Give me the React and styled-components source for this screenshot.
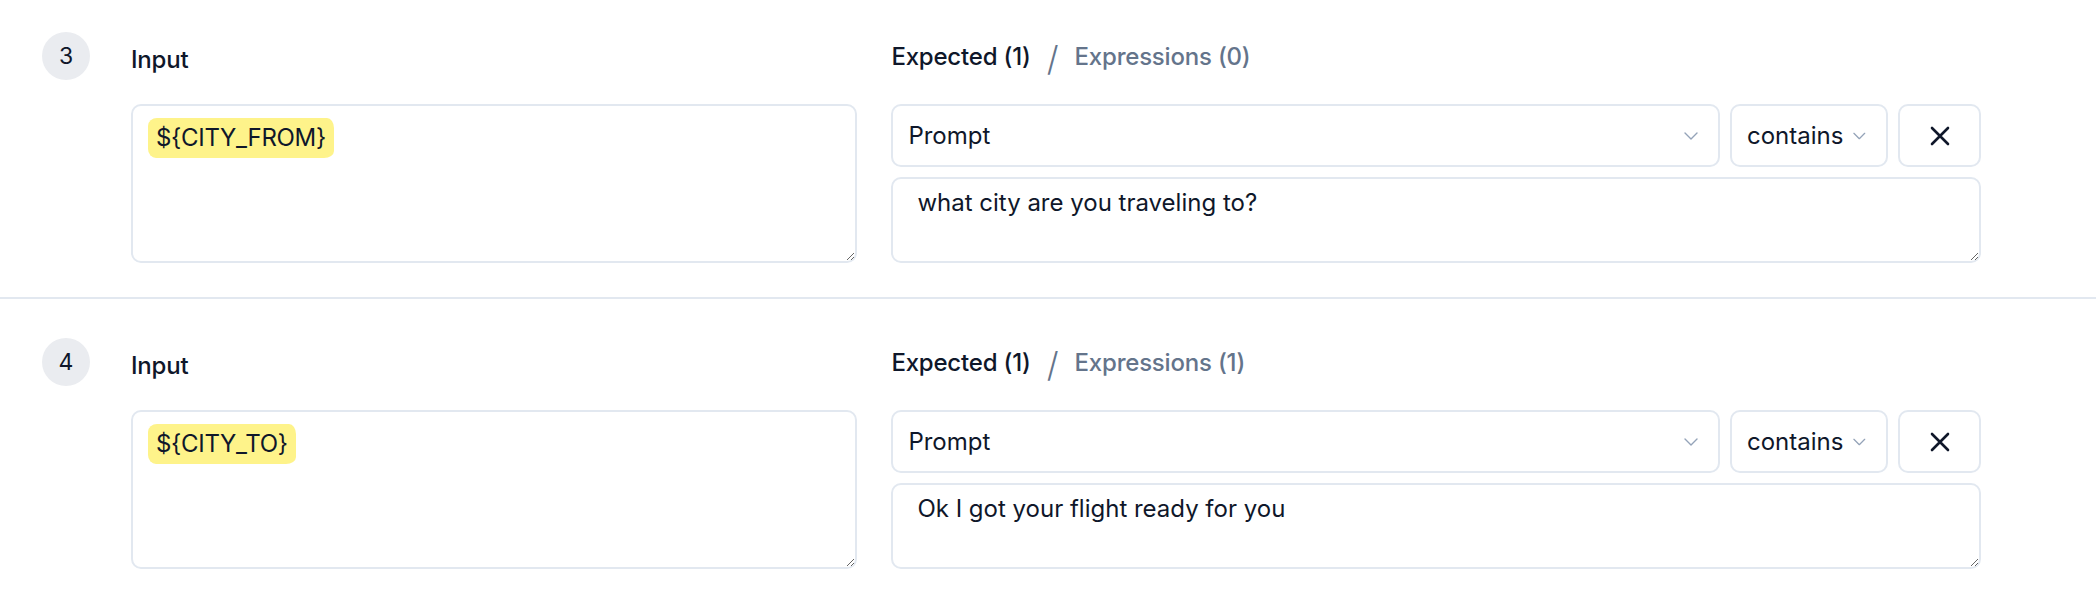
import React from 'react';
import styled, { createGlobalStyle } from 'styled-components';

const GlobalStyle = createGlobalStyle`
  * { box-sizing: border-box; }
  body {
    margin: 0;
    background: #fff;
    font-family: Inter, "Noto Sans", "Liberation Sans", sans-serif;
    color: #0f172a;
  }
`;

const cases = [
  { id: 3, variable: 'CITY_FROM', expected: 1, expressions: 0, text: 'what city are you traveling to?' },
  { id: 4, variable: 'CITY_TO', expected: 1, expressions: 1, text: 'Ok I got your flight ready for you' },
];

function Chevron() {
  return (
    <svg width="14" height="8" viewBox="0 0 14 8" fill="none">
      <polyline points="1,1 7,7 13,1" stroke="#94a3b8" strokeWidth="1.4" strokeLinecap="round" strokeLinejoin="round" />
    </svg>
  );
}

function CloseIcon() {
  return (
    <svg width="20" height="20" viewBox="0 0 20 20" fill="none">
      <path d="M2 2 L18 18 M18 2 L2 18" stroke="#0f172a" strokeWidth="2.6" strokeLinecap="round" />
    </svg>
  );
}

function TestCase({ item }) {
  return (
    <Row>
      <Badge>{item.id}</Badge>
      <Columns>
        <Column>
          <Header>
            <Label $offset>Input</Label>
          </Header>
          <InputBox>
            <Variable>{'${' + item.variable + '}'}</Variable>
          </InputBox>
        </Column>
        <Column>
          <Header>
            <Label>Expected ({item.expected})</Label>
            <Slash>/</Slash>
            <Label $muted>Expressions ({item.expressions})</Label>
          </Header>
          <SelectRow>
            <Select $grow>
              <span>Prompt</span>
              <Chevron />
            </Select>
            <Select $width="158px" $gap="10px">
              <span>contains</span>
              <Chevron />
            </Select>
            <IconButton>
              <CloseIcon />
            </IconButton>
          </SelectRow>
          <ExpectedArea defaultValue={item.text} spellCheck={false} />
        </Column>
      </Columns>
    </Row>
  );
}

export default function App() {
  return (
    <>
      <GlobalStyle />
      <List>
        {cases.map((c) => (
          <TestCase key={c.id} item={c} />
        ))}
      </List>
    </>
  );
}

const List = styled.div`
  width: 100%;
`;

const Row = styled.div`
  display: flex;
  align-items: flex-start;
  gap: 41px;
  padding: 39px 115px 34px 42px;
  border-bottom: 2px solid #e2e8f0;

  &:first-child {
    padding-top: 32px;
  }
  &:last-child {
    border-bottom: none;
  }
`;

const Badge = styled.div`
  flex-shrink: 0;
  width: 48px;
  height: 48px;
  border-radius: 50%;
  background: #eaecf0;
  display: flex;
  align-items: center;
  justify-content: center;
  font-size: 23px;
  font-weight: 400;
  color: #0f172a;
`;

const Columns = styled.div`
  flex: 1;
  display: grid;
  grid-template-columns: 2fr 3fr;
  column-gap: 34px;
`;

const Column = styled.div`
  display: flex;
  flex-direction: column;
  min-width: 0;
`;

const Header = styled.div`
  height: 48px;
  display: flex;
  align-items: center;
  gap: 16px;
  margin-bottom: 24px;
`;

const Label = styled.span`
  font-size: 24px;
  font-weight: 500;
  letter-spacing: -0.2px;
  color: ${(p) => (p.$muted ? '#64748b' : '#0f172a')};
  padding-top: ${(p) => (p.$offset ? '7px' : '0')};
`;

const Slash = styled.span`
  font-size: 34px;
  font-weight: 300;
  color: #64748b;
  margin-top: 4px;
`;

const InputBox = styled.div`
  height: 159px;
  border: 2px solid #e2e8f0;
  border-radius: 10px;
  padding: 12px 15px;
  resize: vertical;
  overflow: auto;
  font-size: 24px;
`;

const Variable = styled.span`
  display: inline-block;
  background: #fef38a;
  border-radius: 9px 7px 10px 8px / 8px 10px 7px 9px;
  padding: 2px 8px;
  line-height: 36px;
  letter-spacing: -0.3px;
  color: #0f172a;
`;

const SelectRow = styled.div`
  display: flex;
  gap: 10px;
  margin-bottom: 10px;
`;

const Select = styled.div`
  flex: ${(p) => (p.$grow ? '1' : '0 0 auto')};
  width: ${(p) => p.$width || 'auto'};
  height: 63px;
  border: 2px solid #e2e8f0;
  border-radius: 10px;
  padding: 0 20px 0 15px;
  display: flex;
  align-items: center;
  justify-content: ${(p) => (p.$gap ? 'flex-start' : 'space-between')};
  gap: ${(p) => p.$gap || '0'};
  font-size: 24px;
  color: #0f172a;
`;

const IconButton = styled.button`
  width: 83px;
  height: 63px;
  border: 2px solid #e2e8f0;
  border-radius: 10px;
  background: #fff;
  display: flex;
  align-items: center;
  justify-content: center;
  padding: 0;
  cursor: pointer;
`;

const ExpectedArea = styled.textarea`
  display: block;
  width: 100%;
  height: 86px;
  border: 2px solid #e2e8f0;
  border-radius: 10px;
  padding: 6px 24px;
  font-family: inherit;
  font-size: 24px;
  line-height: 1.5;
  color: #0f172a;
  resize: vertical;
  outline: none;
`;
